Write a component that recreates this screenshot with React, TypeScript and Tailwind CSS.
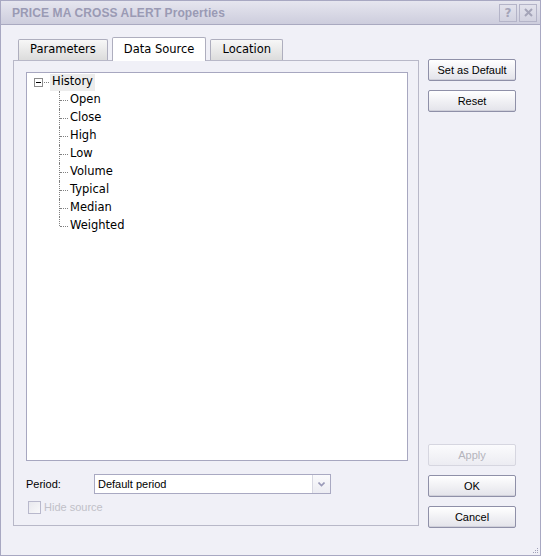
import * as React from "react";

const treeItems = ["Open", "Close", "High", "Low", "Volume", "Typical", "Median", "Weighted"];

function DlgButton({ label, disabled }: { label: string; disabled?: boolean }) {
  return (
    <button
      className={
        "h-[22px] w-[88px] rounded-[2px] border text-[11px] leading-none " +
        (disabled
          ? "border-[#d6d6e0] bg-gradient-to-b from-[#fbfbfd] to-[#ececf2] text-[#b4b4bc]"
          : "border-[#8f90a8] bg-gradient-to-b from-white to-[#e3e3ea] text-black shadow-[inset_0_-1px_0_#d0d0da]")
      }
      style={{ fontFamily: '"Liberation Sans", Arial, sans-serif' }}
    >
      {label}
    </button>
  );
}

function Tab({ label, active }: { label: string; active?: boolean }) {
  return (
    <div
      className={
        "flex items-center justify-center border border-b-0 border-[#aeaebe] rounded-t-[2px] px-[11px] " +
        (active ? "h-[24px] bg-white -mb-px z-10" : "h-[21px] bg-gradient-to-b from-[#f7f7f7] to-[#dcdcdc]")
      }
    >
      {label}
    </div>
  );
}

export default function App() {
  return (
    <div
      className="w-[541px] h-[556px] bg-[#f0f0f7] border border-[#a8a8c2] flex flex-col overflow-hidden text-black"
      style={{ fontFamily: '"DejaVu Sans", Verdana, sans-serif' }}
    >
      {/* title bar */}
      <div className="h-[24px] shrink-0 flex items-center justify-between bg-gradient-to-b from-[#e6e6ef] to-[#cdcddd] border-b border-[#a9a9c0] pl-[11px] pr-[3px]">
        <span
          className="text-[12px] font-bold text-[#9a9ab4] tracking-[0.1px]"
          style={{ fontFamily: '"Liberation Sans", Arial, sans-serif' }}
        >
          PRICE MA CROSS ALERT Properties
        </span>
        <div className="flex gap-[2px]">
          <div className="w-[18px] h-[18px] border border-[#b4b4c8] bg-gradient-to-b from-[#e2e2ec] to-[#d2d2e0] flex items-center justify-center text-[12px] font-bold text-[#a4a4b8]">
            ?
          </div>
          <div className="w-[18px] h-[18px] border border-[#b4b4c8] bg-gradient-to-b from-[#e2e2ec] to-[#d2d2e0] flex items-center justify-center">
            <svg width="9" height="9" viewBox="0 0 9 9">
              <path d="M1 1 L8 8 M8 1 L1 8" stroke="#a4a4b8" strokeWidth="2" />
            </svg>
          </div>
        </div>
      </div>

      {/* body */}
      <div className="flex pl-[12px] pt-[12px] relative flex-1">
        <div className="w-[406px] flex flex-col">
          <div className="flex items-end gap-[4px] pl-[5px] h-[23px] text-[11.5px]">
            <Tab label="Parameters" />
            <Tab label="Data Source" active />
            <Tab label="Location" />
          </div>
          <div className="h-[466px] border border-[#b8b8c8] flex flex-col pl-[12px] pr-[10px] pt-[11px]">
            {/* tree */}
            <div className="h-[389px] border border-[#a7a7c0] bg-white pl-[7px] text-[11.5px]">
              <div className="flex items-center h-[18px]">
                <div className="w-[9px] h-[9px] border border-[#8c8c8c] flex items-center justify-center bg-white">
                  <div className="w-[5px] h-px bg-black" />
                </div>
                <div className="w-[5px] border-t border-dotted border-[#808080] ml-px" />
                <div className="ml-px bg-[#ececec] h-[17px] flex items-center px-[2px]">History</div>
              </div>
              <div className="pl-[25px]">
                {treeItems.map((item, i) => (
                  <div key={item} className="flex items-center h-[18px]">
                    <div className="relative w-[10px] h-full">
                      <div
                        className={
                          "absolute left-0 top-0 border-l border-dotted border-[#808080] " +
                          (i === treeItems.length - 1 ? "h-[9px]" : "h-full")
                        }
                      />
                      <div className="absolute left-px top-[9px] w-[8px] border-t border-dotted border-[#808080]" />
                    </div>
                    <span className="ml-px">{item}</span>
                  </div>
                ))}
              </div>
            </div>

            {/* period */}
            <div
              className="flex items-center mt-[13px] text-[11px]"
              style={{ fontFamily: '"Liberation Sans", Arial, sans-serif' }}
            >
              <span className="w-[68px]">Period:</span>
              <div className="w-[237px] h-[20px] border border-[#a9a9c2] bg-white flex">
                <span className="flex-1 flex items-center pl-[3px]">Default period</span>
                <div className="w-[18px] border-l border-[#d8d8e2] bg-gradient-to-b from-[#fafafc] to-[#ececf2] flex items-center justify-center">
                  <svg width="7" height="5" viewBox="0 0 7 5">
                    <path d="M0.5 0.5 L3.5 3.5 L6.5 0.5" stroke="#9a9ab8" strokeWidth="1.6" fill="none" />
                  </svg>
                </div>
              </div>
            </div>

            {/* hide source */}
            <div
              className="flex items-center mt-[5px] ml-[2px] text-[11px] text-[#c0c0c8]"
              style={{ fontFamily: '"Liberation Sans", Arial, sans-serif' }}
            >
              <div className="w-[13px] h-[13px] border border-[#b8b8cc] bg-gradient-to-br from-[#e8e8ee] to-[#f8f8fa]" />
              <span className="ml-[3px]">Hide source</span>
            </div>
          </div>
        </div>

        {/* right buttons */}
        <div className="ml-[9px] pt-[22px] flex flex-col h-[491px]">
          <div className="flex flex-col gap-[9px]">
            <DlgButton label="Set as Default" />
            <DlgButton label="Reset" />
          </div>
          <div className="flex flex-col gap-[9px] mt-auto">
            <DlgButton label="Apply" disabled />
            <DlgButton label="OK" />
            <DlgButton label="Cancel" />
          </div>
        </div>

        {/* resize grip */}
        <svg className="absolute right-[1px] bottom-[1px]" width="8" height="8" viewBox="0 0 8 8">
          <rect x="6" y="2" width="1" height="1" fill="#a0a0b8" />
          <rect x="4" y="4" width="1" height="1" fill="#a0a0b8" />
          <rect x="6" y="4" width="1" height="1" fill="#a0a0b8" />
          <rect x="2" y="6" width="1" height="1" fill="#a0a0b8" />
          <rect x="4" y="6" width="1" height="1" fill="#a0a0b8" />
          <rect x="6" y="6" width="1" height="1" fill="#a0a0b8" />
        </svg>
      </div>
    </div>
  );
}
